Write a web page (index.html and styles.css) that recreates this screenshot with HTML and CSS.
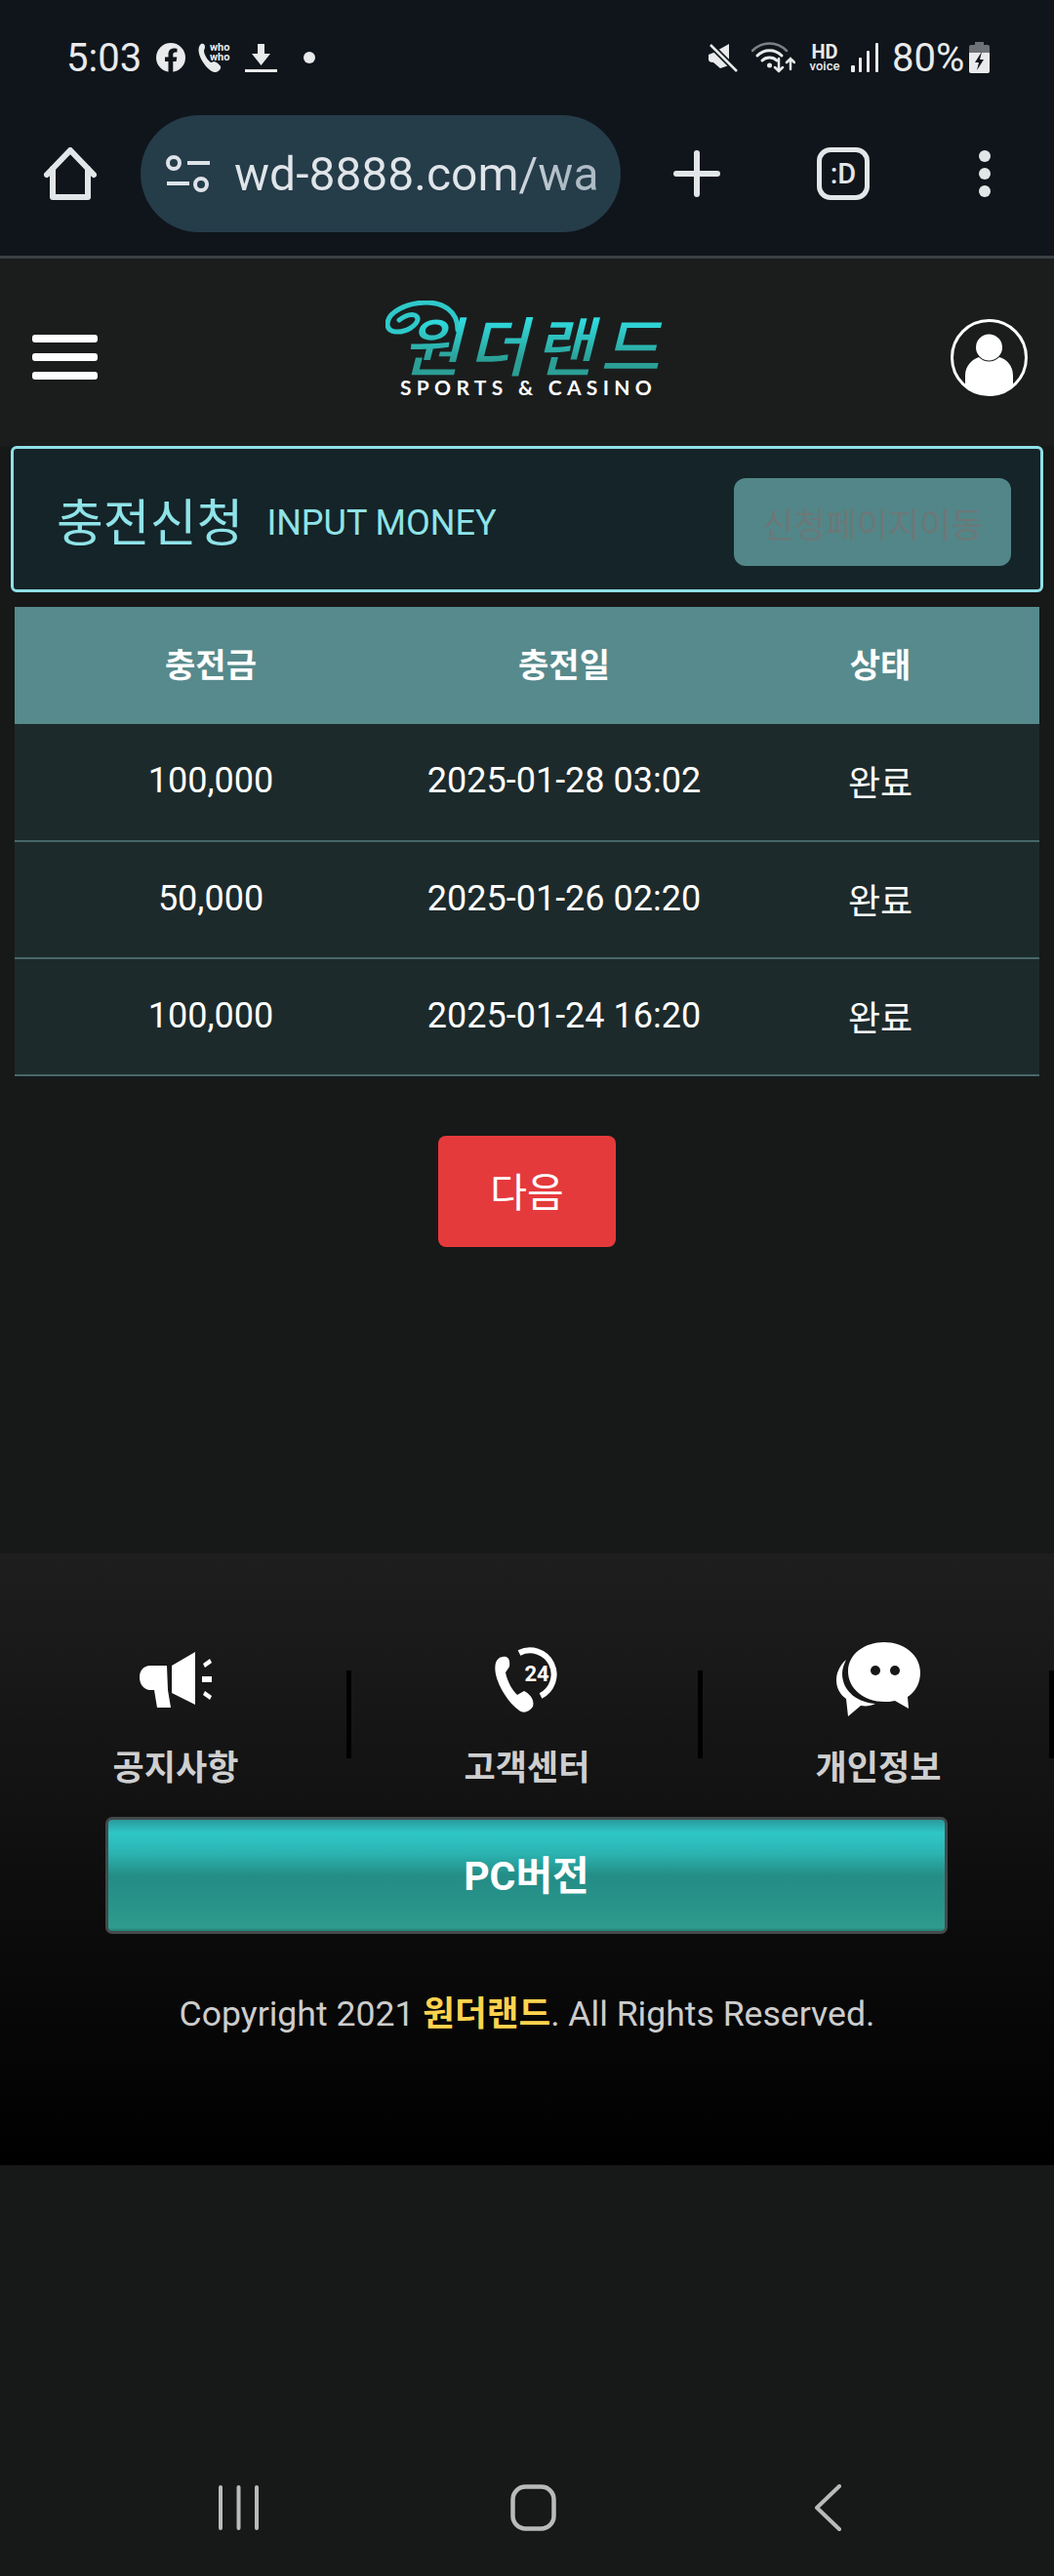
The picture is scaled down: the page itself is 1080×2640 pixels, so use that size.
FILE: index.html
```html
<!DOCTYPE html>
<html lang="ko">
<head>
  <meta charset="UTF-8">
  <title>원더랜드 충전신청</title>
  <link rel="stylesheet" href="styles.css">
</head>
<body>

  <div class="chrome">
    <div class="statusbar">
      <span class="time">5:03</span>
      <svg class="ic-fb" width="30" height="30" viewBox="0 0 30 30"><circle cx="15" cy="15" r="15" fill="#e8eaeb"/><path d="M12.5 30V19H9v-4.500h3.500v-3C12.500 7.500 15 5.500 18.500 5.500c1.500 0 3 .3 3 .3v3.700h-1.800c-1.800 0-2.400 1.100-2.400 2.300v2.700h4l-.7 4.500h-3.300v11z" fill="#0f151b"/></svg>
      <svg class="ic-who" width="37" height="32" viewBox="0 0 37 32"><path d="M3 2c2-1 4 0 4 3 0 2-1 3-1 4 0 4 4 10 7 12 1 .5 2-1 3-1 2 0 6 3 7 5 1 3-3 6-6 6C10 30-2 14 1 5c.3-1 1-2 2-3z" fill="#e8eaeb"/><text class="who-text" x="12" y="9">who</text><text class="who-text" x="12" y="19">who</text></svg>
      <svg class="ic-dl" width="33" height="29" viewBox="0 0 33 29"><path d="M13 0h7v10h6L16.500 22 7 10h6z" fill="#e8eaeb"/><rect y="26" width="33" height="3" fill="#e8eaeb"/></svg>
      <span class="status-dot"></span>
      <span class="status-right">
        <svg class="ic-mute" width="30" height="30" viewBox="0 0 30 30"><path d="M0 12l5-2 16-9v22L12 26 5 20q-5 0-5-3z" fill="#e8eaeb"/><path d="M2 2l27 27" stroke="#0f151b" stroke-width="6"/><path d="M2 2l27 27" stroke="#e8eaeb" stroke-width="2.500"/></svg>
        <svg class="ic-wifi" width="45" height="34" viewBox="0 0 45 34" fill="none" stroke-linecap="round"><path d="M1 10C11 0 26 0 36 10" stroke="#7c8184" stroke-width="2.500"/><path d="M6 15c7-7 18-7 25 0" stroke="#e8eaeb" stroke-width="3"/><path d="M11 20c4-4 11-4 15 0" stroke="#e8eaeb" stroke-width="3"/><circle cx="18.500" cy="25" r="2.500" fill="#e8eaeb"/><path d="M28 18v13m-4-4l4 4 4-4M40 29V18m-4 4l4-4 4 4" stroke="#e8eaeb" stroke-width="2.500"/></svg>
        <span class="hd"><b>HD</b><i>voice</i></span>
        <svg class="ic-signal" width="28" height="30" viewBox="0 0 28 30" fill="#e8eaeb"><rect y="23" width="4" height="7" rx="1"/><rect x="8" y="15" width="3" height="15" rx="1"/><rect x="16" y="8" width="3" height="22" rx="1"/><rect x="25" y="0" width="3" height="30" rx="1"/></svg>
        <span class="battery-text">80%</span>
        <svg class="ic-battery" width="21" height="32" viewBox="0 0 21 32"><path d="M6 0h9v3h4q2 0 2 2v7H0V5q0-2 2-2h4z" fill="#6e7276"/><path d="M0 11h21v19q0 2-2 2H2q-2 0-2-2z" fill="#e8eaeb"/><path d="M13 10l-7 11h4l-2 8 7-11h-4z" fill="#0f151b"/></svg>
      </span>
    </div>
    <div class="toolbar">
      <svg class="ic-home" width="54" height="54" viewBox="0 0 54 54" fill="none" stroke="#e3e6e8" stroke-width="6" stroke-linejoin="round" stroke-linecap="round"><path d="M3 28L27 3l24 25"/><path d="M9 22v29h36V22"/></svg>
      <div class="urlbar">
        <svg class="ic-tune" width="45" height="38" viewBox="0 0 45 38" fill="none" stroke="#dde3e8" stroke-width="4"><circle cx="8" cy="8" r="6"/><path d="M22 8h23M1 29h23"/><circle cx="36" cy="30" r="6"/></svg>
        <span class="urltext">wd-8888.com/wa</span>
      </div>
      <svg class="ic-plus" width="48" height="48" viewBox="0 0 48 48" stroke="#e3e6e8" stroke-width="6" stroke-linecap="round"><path d="M3 24h42M24 3v42"/></svg>
      <span class="tabcount">:D</span>
      <svg class="ic-dots" width="12" height="48" viewBox="0 0 12 48" fill="#e3e6e8"><circle cx="6" cy="6" r="6"/><circle cx="6" cy="24" r="6"/><circle cx="6" cy="42" r="6"/></svg>
    </div>
  </div>

  <header class="topbar">
    <div class="burger"><span></span><span></span><span></span></div>
    <div class="logo">
      <svg class="logo-swirl" width="80" height="40" viewBox="0 0 80 40" fill="none" stroke="#2fc9ca" stroke-width="5" stroke-linecap="round"><path d="M74 30C74 10 58 2 42 2 22 2 2 12 2 24c0 10 14 10 24 4 6-4 10-10 4-13-6-2-12 2-16 5"/></svg>
      <div class="logo-name">원더랜드</div>
      <div class="logo-sub">SPORTS &amp; CASINO</div>
    </div>
    <svg class="ic-user" width="79" height="79" viewBox="0 0 79 79"><circle cx="39.500" cy="39.500" r="38" fill="none" stroke="#fff" stroke-width="3"/><circle cx="39.500" cy="29" r="13.500" fill="#fff"/><path d="M15 67V58c0-11 8-17 14-19 6 6 15 6 21 0 7 2 14 8 14 19v9c-6 6-15 11-24.500 11S21 73 15 67z" fill="#fff"/></svg>
  </header>

  <section class="panel">
    <h2 class="panel-title">충전신청</h2>
    <span class="panel-sub">INPUT MONEY</span>
    <button class="panel-btn">신청페이지이동</button>
  </section>

  <table class="history">
    <colgroup>
      <col class="col-money">
      <col class="col-date">
      <col class="col-state">
    </colgroup>
    <thead>
      <tr><th>충전금</th><th>충전일</th><th>상태</th></tr>
    </thead>
    <tbody>
      <tr><td>100,000</td><td>2025-01-28 03:02</td><td>완료</td></tr>
      <tr><td>50,000</td><td>2025-01-26 02:20</td><td>완료</td></tr>
      <tr><td>100,000</td><td>2025-01-24 16:20</td><td>완료</td></tr>
    </tbody>
  </table>

  <button class="next-btn">다음</button>

  <footer class="footer">
    <div class="foot-links">
      <div class="foot-item">
        <div class="foot-icon">
          <svg width="74" height="57" viewBox="0 0 74 57" fill="#fff"><path d="M28 14H11C4 14 0 19 0 26s4 12 10 13h5l3 18h14l-3-18z"/><path d="M33 14L57 0v54L33 42z"/><rect x="64" y="25" width="10" height="6"/><path d="M65 12l7-5 2 4-7 5zM65 44l7 5 2-4-7-5z"/></svg>
        </div>
        <span>공지사항</span>
      </div>
      <div class="foot-item">
        <div class="foot-icon">
          <svg width="69" height="67" viewBox="0 0 69 67"><path d="M9 10c5-1 8 2 7 10l-4 6c2 10 7 18 12 23l7-4c6 3 11 9 9 16-4 6-10 7-14 4C12 55-2 30 2 16c1-3 4-6 7-6z" fill="#fff"/><path d="M26 6A24 24 0 1 1 48 50" fill="none" stroke="#fff" stroke-width="6"/><text class="phone-24" x="44" y="35">24</text></svg>
        </div>
        <span>고객센터</span>
      </div>
      <div class="foot-item">
        <div class="foot-icon">
          <svg width="86" height="76" viewBox="0 0 86 76"><path d="M10 18C3 24 0 32 0 39c0 8 4 15 10 19l2 18 13-11c6 1 11 0 15-2C24 62 6 52 6 32c0-5 2-10 4-14z" fill="#fff"/><path d="M49 0C69 0 86 13 86 31c0 11-5 20-13 25l1 12-14-8c-4 1-7 1-11 1C29 61 12 48 12 30S29 0 49 0z" fill="#fff"/><circle cx="40" cy="29" r="5" fill="#171717"/><circle cx="60" cy="29" r="5" fill="#171717"/></svg>
        </div>
        <span>개인정보</span>
      </div>
    </div>
    <button class="pc-btn">PC버전</button>
    <p class="copy">Copyright 2021 <b>원더랜드</b>. All Rights Reserved.</p>
  </footer>

  <nav class="sysnav">
    <svg class="ic-recent" width="41" height="46" viewBox="0 0 41 46" stroke="#b9bbbb" stroke-width="4" stroke-linecap="round"><path d="M2 2v42M20.500 2v42M39 2v42"/></svg>
    <svg class="ic-square" width="47" height="48" viewBox="0 0 47 48" fill="none" stroke="#b9bbbb" stroke-width="4.500"><rect x="2.500" y="2.500" width="42" height="43" rx="13"/></svg>
    <svg class="ic-back" width="27" height="48" viewBox="0 0 27 48" fill="none" stroke="#b9bbbb" stroke-width="4" stroke-linecap="round" stroke-linejoin="round"><path d="M25 2L2 24l23 22"/></svg>
  </nav>

</body>
</html>
```

FILE: styles.css
```css
* {
  box-sizing: border-box;
}

html, body {
  margin: 0;
  padding: 0;
}

body {
  width: 1080px;
  height: 2640px;
  display: flex;
  flex-direction: column;
  overflow: hidden;
  background-color: #161918;
  font-family: Roboto, "Noto Sans CJK KR", sans-serif;
  color: #fff;
}

/* phone status bar + browser toolbar */
.chrome {
  height: 265px;
  background-color: #0f151b;
  border-bottom: 3px solid #3a4144;
}

.statusbar {
  height: 118px;
  display: flex;
  align-items: center;
  padding-left: 68px;
  color: #e8eaeb;
}

.time {
  width: 73px;
  font-size: 40px;
}

.ic-fb {
  margin-left: 19px;
}

.ic-who {
  margin-left: 13px;
}

.ic-dl {
  margin-left: 11px;
}

.who-text {
  font-family: Roboto, sans-serif;
  font-size: 11px;
  font-weight: 700;
  fill: #e8eaeb;
}

.status-dot {
  width: 12px;
  height: 12px;
  margin-left: 27px;
  border-radius: 50%;
  background-color: #e8eaeb;
}

.status-right {
  display: flex;
  align-items: center;
  margin-left: auto;
  padding-right: 66px;
}

.ic-wifi {
  margin-left: 14px;
}

.hd {
  display: flex;
  flex-direction: column;
  align-items: center;
  width: 34px;
  margin-left: 13px;
  line-height: 1;
}

.hd b {
  font-size: 20px;
  line-height: 18px;
}

.hd i {
  font-style: normal;
  font-weight: 500;
  font-size: 13px;
  line-height: 12px;
}

.ic-signal {
  margin-left: 10px;
}

.battery-text {
  width: 73px;
  margin-left: 14px;
  font-size: 40px;
}

.ic-battery {
  margin-left: 6px;
}

.toolbar {
  display: flex;
  align-items: center;
  height: 120px;
  padding-left: 45px;
}

.urlbar {
  display: flex;
  align-items: center;
  width: 492px;
  height: 120px;
  margin-left: 45px;
  padding: 0 24px 0 26px;
  border-radius: 60px;
  background-color: #253c49;
  overflow: hidden;
}

.urltext {
  margin-left: 25px;
  font-size: 48px;
  white-space: nowrap;
  background: linear-gradient(90deg, #e0e5e9 72%, #aebcc5 90%);
  -webkit-background-clip: text;
  background-clip: text;
  color: transparent;
}

.ic-tune {
  flex-shrink: 0;
}

.ic-plus {
  margin-left: 54px;
}

.tabcount {
  display: flex;
  align-items: center;
  justify-content: center;
  width: 54px;
  height: 54px;
  margin-left: 99px;
  border: 5px solid #e3e6e8;
  border-radius: 14px;
  font-size: 29px;
  font-weight: 500;
  color: #e3e6e8;
}

.ic-dots {
  margin-left: 112px;
}

/* site header */
.topbar {
  position: relative;
  display: flex;
  justify-content: space-between;
  align-items: flex-start;
  height: 192px;
  padding: 0 27px 0 33px;
  background-color: #1b1d1d;
}

.burger {
  display: flex;
  flex-direction: column;
  gap: 11px;
  width: 67px;
  margin-top: 78px;
}

.burger span {
  height: 8px;
  border-radius: 3px;
  background-color: #fff;
}

.logo {
  position: relative;
  width: 284px;
  height: 98px;
  margin-top: 43px;
}

.logo-swirl {
  position: absolute;
  left: 0;
  top: 0;
}

.logo-name {
  position: absolute;
  left: 24px;
  top: 3px;
  font-family: "Noto Sans CJK KR", sans-serif;
  font-size: 66px;
  font-weight: 500;
  line-height: 80px;
  letter-spacing: 7px;
  white-space: nowrap;
  transform: skewX(-14deg);
  background: linear-gradient(180deg, #30dadd 22%, #2b9f96 72%);
  -webkit-background-clip: text;
  background-clip: text;
  color: transparent;
}

.logo-sub {
  position: absolute;
  left: 15px;
  bottom: -3px;
  font-family: Lato, sans-serif;
  font-size: 21px;
  font-weight: 700;
  line-height: 24px;
  letter-spacing: 5.300px;
  white-space: nowrap;
}

.ic-user {
  margin-top: 62px;
}

/* title panel */
.panel {
  display: flex;
  align-items: center;
  width: 1058px;
  height: 150px;
  margin-left: 11px;
  padding: 0 30px 0 44px;
  border: 3px solid #8fe0e6;
  border-radius: 6px;
  background-color: #142428;
  color: #8fe3e8;
}

.panel-title {
  margin: 0;
  font-size: 52px;
  font-weight: 400;
}

.panel-sub {
  margin: 7px 0 0 24px;
  font-size: 36px;
}

.panel-btn {
  width: 284px;
  height: 90px;
  margin: 6px 0 0 auto;
  padding: 0;
  border: none;
  border-radius: 12px;
  background-color: #528688;
  font-family: inherit;
  font-size: 35px;
  color: #6c7878;
}

/* charge history */
.history {
  width: 1050px;
  margin: 15px 0 0 15px;
  border-collapse: collapse;
  table-layout: fixed;
}

.col-money {
  width: 402px;
}

.col-date {
  width: 322px;
}

.col-state {
  width: 326px;
}

.history th {
  height: 120px;
  padding: 0 0 5px;
  background-color: #578a8c;
  font-size: 34px;
  font-weight: 700;
}

.history td {
  height: 120px;
  padding: 0 0 3px;
  border-bottom: 2px solid #48686a;
  background-color: #1d2a2b;
  text-align: center;
  font-size: 36px;
}

.next-btn {
  align-self: center;
  width: 182px;
  height: 114px;
  margin-top: 61px;
  padding: 0 0 5px;
  border: none;
  border-radius: 8px;
  background-color: #e53a3c;
  font-family: inherit;
  font-size: 41px;
  color: #fff;
}

/* footer */
.footer {
  height: 627px;
  margin-top: 314px;
  padding-top: 91px;
  background: linear-gradient(180deg, #1e1e1e 0%, #000 100%);
}

.foot-links {
  display: grid;
  grid-template-columns: repeat(3, 360px);
}

.foot-item {
  position: relative;
  display: flex;
  flex-direction: column;
  align-items: center;
  font-size: 35px;
  font-weight: 700;
  line-height: 40px;
  color: #cfcfcf;
}

.foot-item::after {
  content: "";
  position: absolute;
  right: 0;
  top: 29px;
  width: 5px;
  height: 90px;
  background-color: #000;
}

.foot-icon {
  display: flex;
  align-items: center;
  justify-content: center;
  height: 76px;
  margin-bottom: 34px;
}

.phone-24 {
  font-family: Roboto, sans-serif;
  font-size: 22px;
  font-weight: 700;
  fill: #fff;
  text-anchor: middle;
}

.pc-btn {
  display: block;
  width: 863px;
  height: 120px;
  margin: 29px 0 0 108px;
  padding: 0 0 6px;
  border: 3px solid #454a4a;
  border-radius: 7px;
  background: linear-gradient(180deg, #2a9a9c 0%, #2fc7c7 12%, #2bb4b2 30%, #248d86 50%, #279389 75%, #2f9b8e 97%, #267c73 100%);
  font-family: inherit;
  font-size: 41px;
  font-weight: 700;
  color: #fff;
}

.copy {
  margin: 57px 0 0;
  text-align: center;
  font-size: 35.600px;
  line-height: 50px;
  color: #cdcdcd;
}

.copy b {
  color: #ffd34e;
}

/* android nav buttons */
.sysnav {
  display: flex;
  align-items: center;
  height: 140px;
  margin-top: auto;
  padding-left: 224px;
}

.ic-square {
  margin-left: 258px;
}

.ic-back {
  margin-left: 265px;
}
```
